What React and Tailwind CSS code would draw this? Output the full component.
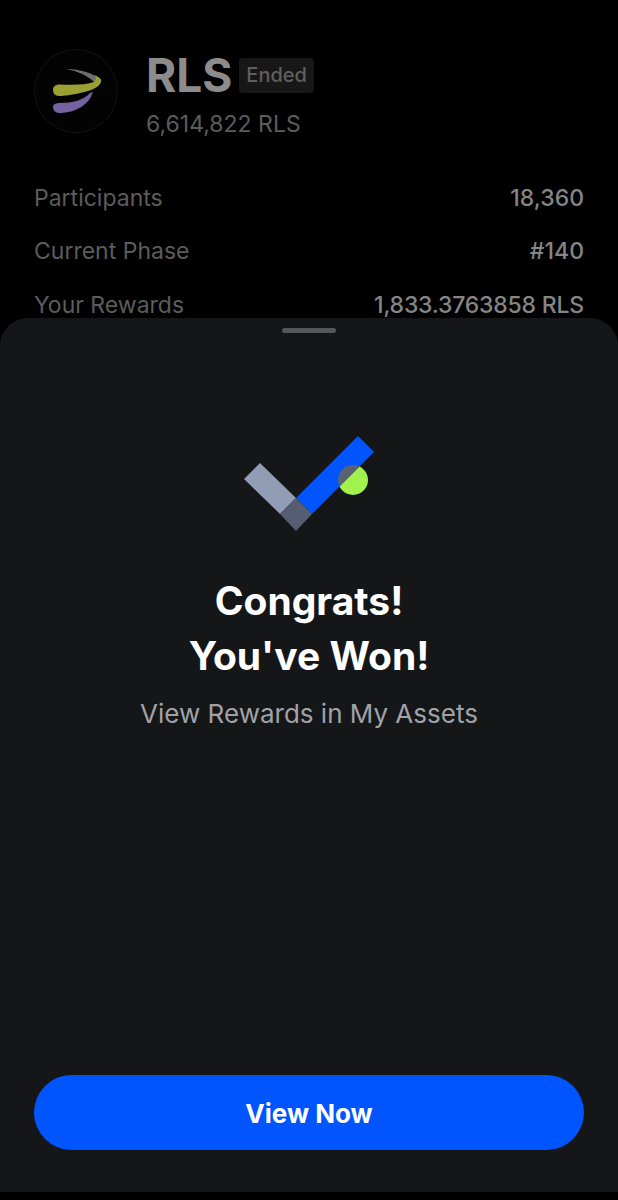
const stats = [
	{ label: "Participants", value: "18,360", spacing: "tracking-normal" },
	{ label: "Current Phase", value: "#140", spacing: "tracking-normal" },
	{ label: "Your Rewards", value: "1,833.3763858 RLS", spacing: "tracking-[-0.2px]" },
];

function TokenLogo() {
	return (
		<svg viewBox="0 0 84 84" className="w-[84px] h-[84px] shrink-0">
			<circle cx="42" cy="42" r="41.5" fill="#030303" stroke="#141414" />
			<path d="M32 20 C46 20 60 24 66 31 L60 33 C54 27 44 22 32 20 Z" fill="#6e6e6e" />
			<path d="M19 41 C19 37 22 35.5 26 35.5 C40 36 52 36 60 33 C62 31 63 28 60 26 C66 28 68 31 67 33 C65 39 56 42 46 44 C38 46 30 47 25 47 C21 47 19 44 19 41 Z" fill="#9aa032" />
			<path d="M19 58 C19 55 22 54 26 54 C38 54 50 51 56 44 L59 43 C55 56 42 63 28 64 C22 64.5 19 62 19 58 Z" fill="#74619f" />
		</svg>
	);
}

function CheckMark() {
	return (
		<svg viewBox="0 0 132 98" className="w-[132px] h-[98px]">
			<defs>
				<clipPath id="blue-bar">
					<polygon points="114,2 130,18 68,80 52,64" />
				</clipPath>
			</defs>
			<circle cx="109" cy="46" r="15" fill="#a3f14f" />
			<polygon points="16,29 0,45 36,80 52,64" fill="#919cb5" />
			<polygon points="114,2 130,18 68,80 52,64" fill="#0055ff" />
			<polygon points="52,64 68,80 52,97 36,80" fill="#565d72" />
			<circle cx="109" cy="46" r="15" fill="#5c6275" clipPath="url(#blue-bar)" />
		</svg>
	);
}

export default function App() {
	return (
		<div className="h-[1200px] bg-black overflow-hidden font-['Inter',sans-serif]">
			{/* Dimmed page behind the sheet */}
			<div className="h-[318px] px-[34px] pt-[49px] overflow-hidden">
				<div className="flex items-start gap-[28px]">
					<TokenLogo />
					<div className="flex flex-col gap-[9px]">
						<div className="flex items-center gap-[7px]">
							<span className="text-[46px] leading-[52px] font-bold text-[#8c8c8c]">RLS</span>
							<span className="h-[35px] px-[7px] flex items-center rounded bg-[#171717] text-[20px] font-medium text-[#5f5f5f]">Ended</span>
						</div>
						<span className="text-[23px] leading-[28px] text-[#5c5c5c]">6,614,822 RLS</span>
					</div>
				</div>
				<div className="mt-[44px] flex flex-col gap-[21.5px]">
					{stats.map((stat) => (
						<div key={stat.label} className="flex items-center justify-between h-[32px] text-[23px]">
							<span className="text-[#5c5c5c]">{stat.label}</span>
							<span className={`font-medium text-[#858585] ${stat.spacing}`}>{stat.value}</span>
						</div>
					))}
				</div>
			</div>

			{/* Bottom sheet */}
			<div className="h-[874px] bg-[#151618] rounded-t-[28px] px-[34px] flex flex-col items-center">
				<div className="mt-[10px] w-[54px] h-[5px] rounded-full bg-[#55565c]" />
				<div className="mt-[101px] ml-[2px]">
					<CheckMark />
				</div>
				<h1 className="mt-[41px] text-[39px] leading-[55px] font-bold text-white text-center">
					Congrats!
					<br />
					You've Won!
				</h1>
				<p className="mt-[13px] text-[26px] leading-[36px] text-[#a0a2a8]">View Rewards in My Assets</p>
				<button
					type="button"
					className="mt-auto mb-[42px] w-full h-[75px] pt-[1px] rounded-full bg-[#0055ff] text-white text-[26px] font-bold"
				>
					View Now
				</button>
			</div>
		</div>
	);
}
